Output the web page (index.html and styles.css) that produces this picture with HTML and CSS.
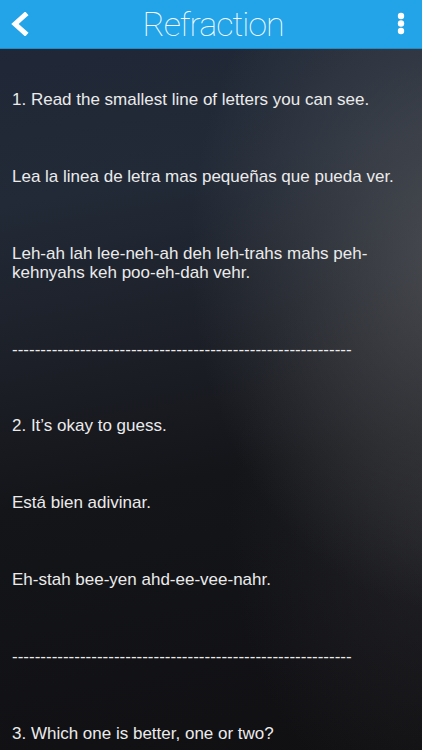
FILE: index.html
```html
<!DOCTYPE html>
<html>
<head>
<meta charset="utf-8">
<link rel="stylesheet" href="styles.css">
</head>
<body>
<div class="screen">
  <header class="topbar">
    <svg class="back" width="20" height="24" viewBox="0 0 20 24"><path d="M15 3 L5 12 L15 21" fill="none" stroke="#fff" stroke-width="5" stroke-linecap="square" stroke-linejoin="miter"/></svg>
    <h1 class="title">Refraction</h1>
    <svg class="menu" width="10" height="26" viewBox="0 0 10 26"><circle cx="5" cy="5" r="3.2" fill="#fff"/><circle cx="5" cy="12.5" r="3.2" fill="#fff"/><circle cx="5" cy="20" r="3.2" fill="#fff"/></svg>
  </header>
  <main class="content">
    <p>1. Read the smallest line of letters you can see.</p>
    <p>Lea la linea de letra mas pequeñas que pueda ver.</p>
    <p>Leh-ah lah lee-neh-ah deh leh-trahs mahs peh-kehnyahs keh poo-eh-dah vehr.</p>
    <p>------------------------------------------------------------</p>
    <p>2. It’s okay to guess.</p>
    <p>Está bien adivinar.</p>
    <p>Eh-stah bee-yen ahd-ee-vee-nahr.</p>
    <p>------------------------------------------------------------</p>
    <p>3. Which one is better, one or two?</p>
  </main>
</div>
</body>
</html>
```
FILE: styles.css
```css
html, body {
  margin: 0;
  padding: 0;
}
body {
  width: 422px;
  height: 750px;
  overflow: hidden;
  font-family: "Liberation Sans", Arial, sans-serif;
}
.screen {
  width: 422px;
  height: 750px;
  display: flex;
  flex-direction: column;
  background:
    radial-gradient(ellipse 260px 360px at 450px 250px, rgba(88, 90, 94, 0.7), rgba(88, 90, 94, 0) 100%),
    radial-gradient(ellipse 200px 300px at 430px 520px, rgba(60, 60, 64, 0.35), rgba(60, 60, 64, 0) 100%),
    linear-gradient(170deg, #1f2737 0%, #222a37 25%, #1c1f27 45%, #141519 62%, #101013 100%);
}
.topbar {
  height: 48px;
  flex: 0 0 48px;
  background: #23a4e9;
  border-bottom: 1px solid #1d8ccb;
  display: flex;
  align-items: center;
  justify-content: space-between;
  padding: 0 16px 0 10px;
  box-sizing: content-box;
}
.back {
  display: block;
}
.title {
  margin: 0;
  font-family: Roboto, "Liberation Sans", sans-serif;
  font-weight: 100;
  font-size: 34px;
  letter-spacing: -1px;
  color: #fff;
  line-height: 48px;
}
.menu {
  display: block;
}
.content {
  padding: 41px 12px 0 12px;
  display: flex;
  flex-direction: column;
  gap: 57.6px;
  color: #ebebeb;
  font-size: 17px;
  line-height: 19.2px;
}
.content p {
  margin: 0;
}
```
